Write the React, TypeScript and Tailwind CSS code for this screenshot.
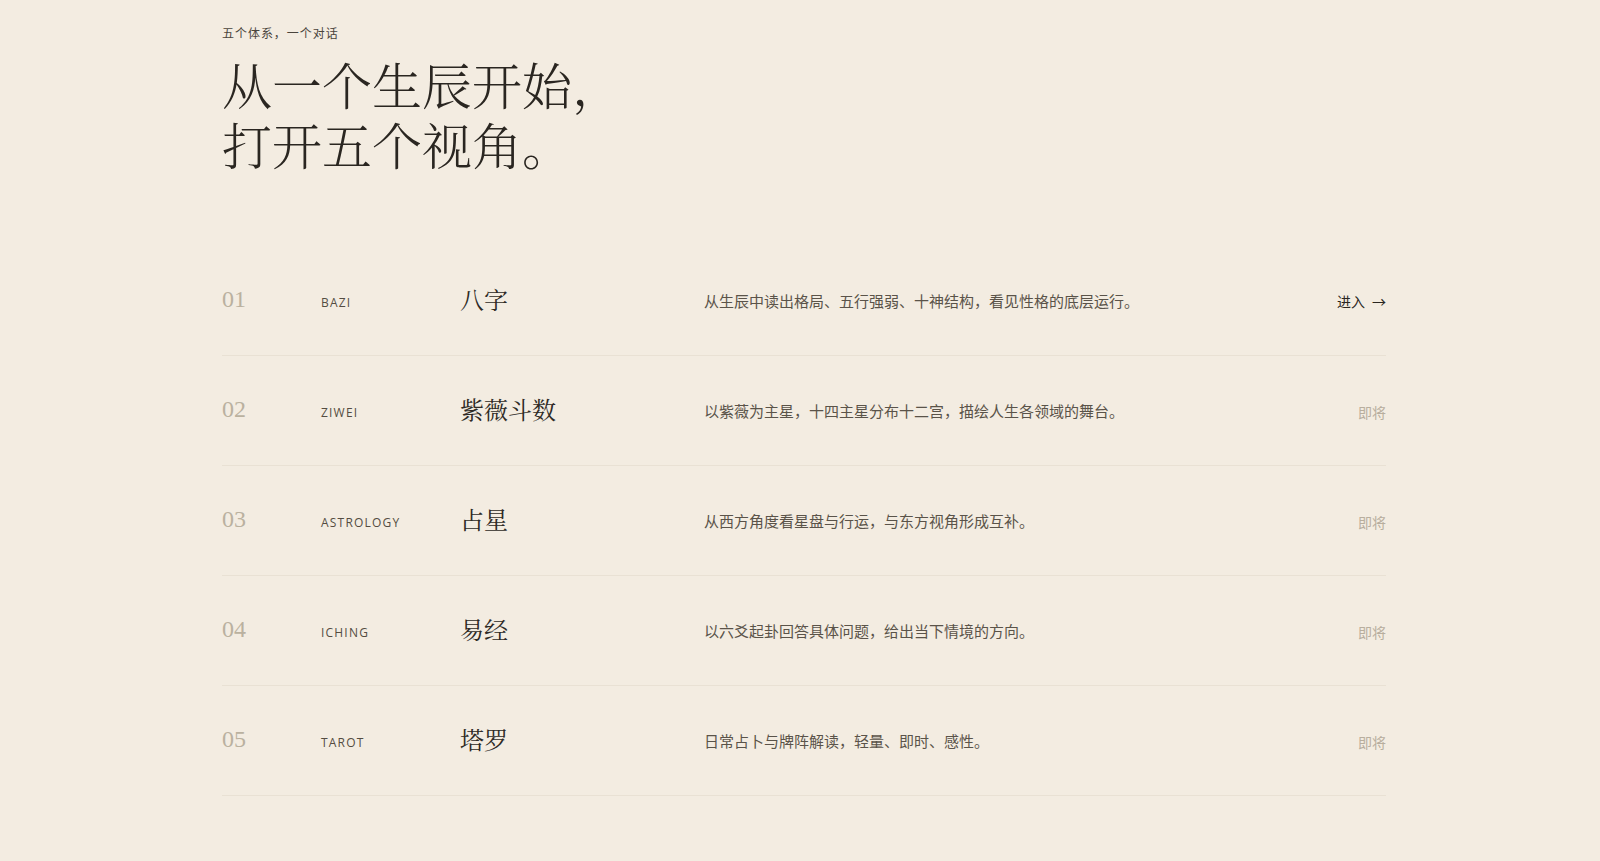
import React from "react";

const rows = [
  { n: "01", en: "BAZI", zh: "八字", desc: "从生辰中读出格局、五行强弱、十神结构，看见性格的底层运行。", active: true },
  { n: "02", en: "ZIWEI", zh: "紫薇斗数", desc: "以紫薇为主星，十四主星分布十二宫，描绘人生各领域的舞台。", active: false },
  { n: "03", en: "ASTROLOGY", zh: "占星", desc: "从西方角度看星盘与行运，与东方视角形成互补。", active: false },
  { n: "04", en: "ICHING", zh: "易经", desc: "以六爻起卦回答具体问题，给出当下情境的方向。", active: false },
  { n: "05", en: "TAROT", zh: "塔罗", desc: "日常占卜与牌阵解读，轻量、即时、感性。", active: false },
];

const serifCJK = "font-['Noto_Serif_CJK_SC','Noto_Sans_CJK_SC',serif]";

export default function App() {
  return (
    <div className="min-h-[861px] w-full bg-[#f3ece1] font-['Noto_Sans_CJK_SC',sans-serif]">
      <div className="pl-[222px] pt-[24px]">
        <div className="w-[1164px]">
          <p className="text-[12px] leading-[18px] tracking-[0.08em] text-[#4a443c]">五个体系，一个对话</p>
          <h1 className={`mt-[11px] text-[50px] leading-[60px] font-light text-[#2a2621] ${serifCJK}`}>
            从一个生辰开始，
            <br />
            打开五个视角。
          </h1>

          <div className="mt-[73px]">
            {rows.map((r) => (
              <div
                key={r.n}
                className="grid h-[110px] grid-cols-[99px_139px_244px_1fr_auto] items-center border-b border-[#e9e1d4]"
              >
                <span className="font-['Liberation_Serif',serif] text-[24px] leading-none text-[#bab19f] pb-[3px]">
                  {r.n}
                </span>
                <span className="font-['Open_Sans',sans-serif] text-[12px] tracking-[0.1em] text-[#544c42] pt-[4px]">
                  {r.en}
                </span>
                <span className={`text-[24px] leading-none text-[#2e2a25] pb-[4px] ${serifCJK}`}>{r.zh}</span>
                <span className="text-[15px] text-[#5a5349] pt-[2px]">{r.desc}</span>
                {r.active ? (
                  <span className="flex items-center gap-[7px] text-[14px] text-[#2a2621] pt-[2px]">
                    <span>进入</span>
                    <span>→</span>
                  </span>
                ) : (
                  <span className="text-[14px] text-[#b8ae9e] pt-[4px]">即将</span>
                )}
              </div>
            ))}
          </div>
        </div>
      </div>
    </div>
  );
}
